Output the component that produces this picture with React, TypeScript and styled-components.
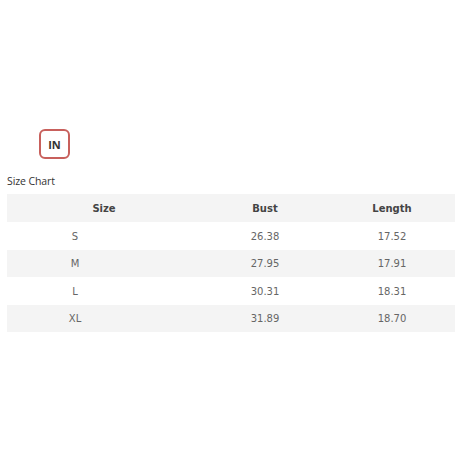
import React from 'react';
import styled, { createGlobalStyle } from 'styled-components';

const GlobalStyle = createGlobalStyle`
  html, body {
    margin: 0;
    padding: 0;
    background: #ffffff;
  }
`;

const Page = styled.div`
  width: 460px;
  height: 460px;
  padding: 129px 5px 0 7px;
  box-sizing: border-box;
  font-family: "DejaVu Sans", Verdana, sans-serif;
`;

const UnitRow = styled.div`
  display: flex;
  padding-left: 32px;
`;

const UnitButton = styled.div`
  width: 31px;
  height: 30px;
  box-sizing: border-box;
  border: 2px solid #c8605c;
  border-radius: 6px;
  display: flex;
  align-items: center;
  justify-content: center;
  font-family: "Open Sans", sans-serif;
  font-weight: 700;
  font-size: 11px;
  color: #333333;
`;

const Caption = styled.div`
  margin-top: 12px;
  height: 20px;
  line-height: 20px;
  font-family: "Open Sans", sans-serif;
  font-size: 10.5px;
  letter-spacing: -0.1px;
  color: #333333;
`;

const Table = styled.div`
  margin-top: 3px;
  width: 448px;
`;

const Row = styled.div<{ $striped: boolean; $h: number }>`
  display: grid;
  grid-template-columns: 194px 128px 126px;
  height: ${p => p.$h}px;
  align-items: center;
  background: ${p => (p.$striped ? '#f4f4f4' : '#ffffff')};
`;

const HeadCell = styled.div`
  text-align: center;
  font-size: 10px;
  font-weight: 700;
  color: #444444;
`;

const Cell = styled.div<{ $first?: boolean }>`
  text-align: center;
  font-size: 10px;
  color: #666666;
  ${p => (p.$first ? 'padding-right: 58px;' : '')}
`;

const rows = [
  ['S', '26.38', '17.52'],
  ['M', '27.95', '17.91'],
  ['L', '30.31', '18.31'],
  ['XL', '31.89', '18.70'],
];
const heights = [28, 27, 28, 27];

export default function App() {
  return (
    <>
      <GlobalStyle />
      <Page>
        <UnitRow>
          <UnitButton>IN</UnitButton>
        </UnitRow>
        <Caption>Size Chart</Caption>
        <Table>
          <Row $striped $h={28}>
            <HeadCell>Size</HeadCell>
            <HeadCell>Bust</HeadCell>
            <HeadCell>Length</HeadCell>
          </Row>
          {rows.map((r, i) => (
            <Row key={r[0]} $striped={i % 2 === 1} $h={heights[i]}>
              <Cell $first>{r[0]}</Cell>
              <Cell>{r[1]}</Cell>
              <Cell>{r[2]}</Cell>
            </Row>
          ))}
        </Table>
      </Page>
    </>
  );
}
